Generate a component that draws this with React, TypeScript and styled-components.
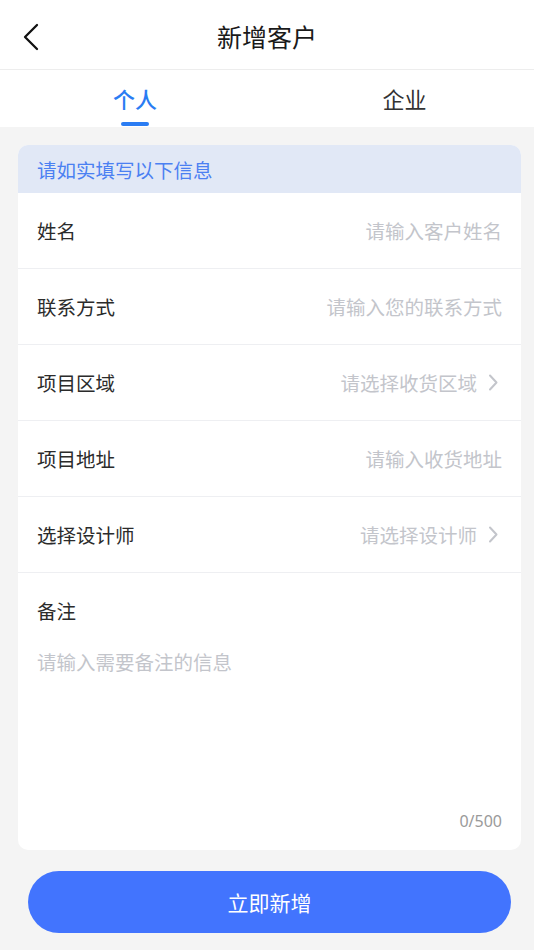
import React from "react";
import styled, { createGlobalStyle } from "styled-components";

const Global = createGlobalStyle`
  html, body { margin: 0; padding: 0; background: #f4f4f4; }
  body { font-family: "Noto Sans CJK SC", "Noto Sans", sans-serif; }
  * { box-sizing: border-box; }
`;

const Page = styled.div`
  width: 534px;
  min-height: 950px;
  background: #f4f4f4;
  display: flex;
  flex-direction: column;
`;

const Header = styled.header`
  height: 70px;
  background: #fff;
  border-bottom: 1px solid #ededed;
  display: flex;
  align-items: center;
  justify-content: center;
  position: relative;
`;

const BackButton = styled.button`
  position: absolute;
  left: 16px;
  top: 20px;
  width: 30px;
  height: 34px;
  border: 0;
  background: none;
  padding: 0;
  display: flex;
  align-items: center;
  justify-content: center;
`;

const Title = styled.h1`
  margin: 0;
  font-size: 25px;
  font-weight: 400;
  color: #1a1a1a;
  line-height: 1;
  padding-top: 3px;
`;

const Tabs = styled.nav`
  height: 57px;
  background: #fff;
  display: grid;
  grid-template-columns: 270px 1fr;
`;

const Tab = styled.div<{ $active?: boolean; $shift?: number }>`
  display: flex;
  flex-direction: column;
  align-items: center;
  justify-content: flex-start;
  padding-top: 16px;
  padding-left: ${(p) => p.$shift ?? 0}px;
  font-size: 22px;
  line-height: 25px;
  color: ${(p) => (p.$active ? "#2a7cf3" : "#333")};
  font-weight: ${(p) => (p.$active ? 500 : 400)};
  &::after {
    content: "";
    display: block;
    width: 28px;
    height: 4px;
    border-radius: 2px;
    margin-top: 11px;
    background: ${(p) => (p.$active ? "#2a7cf3" : "transparent")};
  }
`;

const Content = styled.main`
  padding: 18px 13px 0 18px;
  display: flex;
  flex-direction: column;
`;

const Card = styled.section`
  background: #fff;
  border-radius: 10px;
  overflow: hidden;
`;

const Notice = styled.div`
  height: 48px;
  background: #e1e8f6;
  color: #4b80f2;
  font-size: 19.5px;
  display: flex;
  align-items: center;
  padding: 0 19px;
`;

const Row = styled.label`
  height: 76px;
  display: flex;
  align-items: center;
  padding: 0 19px;
  border-bottom: 1px solid #eeeff2;
  gap: 12px;
`;

const Label = styled.span`
  font-size: 19.5px;
  color: #2b2b2b;
  white-space: nowrap;
`;

const Field = styled.input`
  flex: 1;
  min-width: 0;
  border: 0;
  outline: none;
  background: transparent;
  text-align: right;
  font-family: inherit;
  font-size: 19.5px;
  color: #333;
  padding: 0;
  &::placeholder { color: #c3c5cb; }
`;

const Select = styled.div`
  flex: 1;
  display: flex;
  align-items: center;
  justify-content: flex-end;
  gap: 11px;
  padding-right: 4px;
  font-size: 19.5px;
  color: #c3c5cb;
`;

const RemarkBlock = styled.div`
  padding: 28px 19px 17px;
  display: flex;
  flex-direction: column;
`;

const RemarkLabel = styled(Label)`
  line-height: 20px;
`;

const RemarkArea = styled.textarea`
  margin-top: 28px;
  height: 160px;
  border: 0;
  outline: none;
  resize: none;
  padding: 0;
  font-family: inherit;
  font-size: 19.5px;
  line-height: 26px;
  color: #333;
  &::placeholder { color: #c3c5cb; }
`;

const Counter = styled.div`
  text-align: right;
  font-family: "Noto Sans", sans-serif;
  font-size: 16px;
  line-height: 24px;
  color: #9a9a9a;
`;

const SubmitButton = styled.button`
  margin: 21px 10px 0;
  height: 62px;
  border: 0;
  border-radius: 31px;
  background: #4274fe;
  color: #fff;
  font-family: inherit;
  font-size: 21px;
`;

const Chevron = () => (
  <svg width="10" height="17" viewBox="0 0 10 17" fill="none">
    <polyline points="2,1.5 8.5,8.5 2,15.5" stroke="#c3c5cb" strokeWidth="2" strokeLinecap="round" strokeLinejoin="round" />
  </svg>
);

const rows: { label: string; placeholder: string; select?: boolean }[] = [
  { label: "姓名", placeholder: "请输入客户姓名" },
  { label: "联系方式", placeholder: "请输入您的联系方式" },
  { label: "项目区域", placeholder: "请选择收货区域", select: true },
  { label: "项目地址", placeholder: "请输入收货地址" },
  { label: "选择设计师", placeholder: "请选择设计师", select: true },
];

export default function App() {
  return (
    <Page>
      <Global />
      <Header>
        <BackButton aria-label="返回">
          <svg width="18" height="28" viewBox="0 0 18 28" fill="none">
            <polyline points="15,2 3,14 15,26" stroke="#111" strokeWidth="2.3" strokeLinecap="round" strokeLinejoin="round" />
          </svg>
        </BackButton>
        <Title>新增客户</Title>
      </Header>
      <Tabs>
        <Tab $active>个人</Tab>
        <Tab $shift={5}>企业</Tab>
      </Tabs>
      <Content>
        <Card>
          <Notice>请如实填写以下信息</Notice>
          {rows.map((r) => (
            <Row key={r.label}>
              <Label>{r.label}</Label>
              {r.select ? (
                <Select>
                  {r.placeholder}
                  <Chevron />
                </Select>
              ) : (
                <Field placeholder={r.placeholder} />
              )}
            </Row>
          ))}
          <RemarkBlock>
            <RemarkLabel>备注</RemarkLabel>
            <RemarkArea placeholder="请输入需要备注的信息" />
            <Counter>0/500</Counter>
          </RemarkBlock>
        </Card>
        <SubmitButton>立即新增</SubmitButton>
      </Content>
    </Page>
  );
}
